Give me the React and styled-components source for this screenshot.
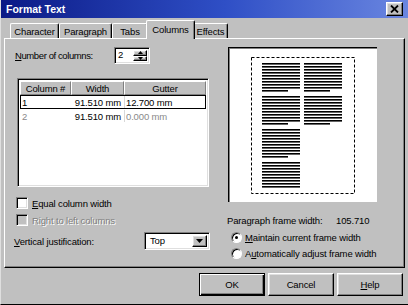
import React from 'react';
import styled, { createGlobalStyle, css } from 'styled-components';

const GlobalStyle = createGlobalStyle`
  html, body {
    margin: 0;
    padding: 0;
    overflow: hidden;
    background: #c0c0c0;
  }
`;

const raised = css`
  border-top: 1px solid #fff;
  border-left: 1px solid #fff;
  border-right: 1px solid #000;
  border-bottom: 1px solid #000;
  box-shadow: inset -1px -1px 0 #808080, inset 1px 1px 0 #dfdfdf;
`;

const sunken = css`
  border-top: 1px solid #808080;
  border-left: 1px solid #808080;
  border-right: 1px solid #fff;
  border-bottom: 1px solid #fff;
  box-shadow: inset 1px 1px 0 #000, inset -1px -1px 0 #dfdfdf;
`;

const Window = styled.div`
  box-sizing: border-box;
  width: 408px;
  height: 305px;
  padding: 0 3px 3px 3px;
  background: #c0c0c0;
  border-left: 1px solid #dfdfdf;
  border-bottom: 1px solid #000;
  display: flex;
  flex-direction: column;
  font-family: "Liberation Sans", Arial, sans-serif;
  font-size: 9.5px;
  letter-spacing: -0.15px;
  color: #000;
  white-space: nowrap;
`;

const TitleBar = styled.div`
  height: 18px;
  margin: 0 -3px;
  padding: 0 5px;
  display: flex;
  align-items: center;
  justify-content: space-between;
  background: linear-gradient(to right, #0b1a86 0%, #2f4fc6 55%, #6a86e0 100%);
`;

const Title = styled.span`
  color: #fff;
  font-weight: bold;
  font-size: 10.5px;
  letter-spacing: 0;
`;

const CloseButton = styled.div`
  box-sizing: border-box;
  width: 17px;
  height: 14px;
  background: #c0c0c0;
  display: flex;
  align-items: center;
  justify-content: center;
  ${raised};
`;

const TabRow = styled.div`
  height: 18px;
  margin-top: 2px;
  padding-left: 6px;
  display: flex;
  align-items: flex-end;
`;

const Tab = styled.div`
  box-sizing: border-box;
  width: ${(p) => p.$w}px;
  height: ${(p) => (p.$active ? 19 : 15)}px;
  margin: 0 ${(p) => (p.$active ? -2 : 0)}px ${(p) => (p.$active ? -1 : 0)}px;
  position: relative;
  z-index: ${(p) => (p.$active ? 2 : 1)};
  background: #c0c0c0;
  border-top: 1px solid #fff;
  border-left: 1px solid #fff;
  border-right: 1px solid #000;
  border-radius: 2px 2px 0 0;
  box-shadow: inset -1px 0 0 #808080;
  display: flex;
  align-items: center;
  justify-content: center;
  padding-bottom: ${(p) => (p.$active ? 2 : 0)}px;
`;

const Panel = styled.div`
  box-sizing: border-box;
  height: 230px;
  padding: 8px 4px 0 7px;
  display: flex;
  ${raised};
  box-shadow: inset -1px -1px 0 #808080;
`;

const LeftCol = styled.div`
  width: 207px;
  display: flex;
  flex-direction: column;
`;

const RightCol = styled.div`
  flex: 1;
  display: flex;
  flex-direction: column;
  padding-left: 8px;
`;

const NumRow = styled.div`
  height: 17px;
  display: flex;
  align-items: center;
`;

const NumLabel = styled.span`
  width: 99px;
  padding-left: 3px;
  letter-spacing: -0.4px;
`;

const Spinner = styled.div`
  box-sizing: border-box;
  width: 36px;
  height: 17px;
  background: #fff;
  display: flex;
  ${sunken};
`;

const SpinValue = styled.span`
  flex: 1;
  padding: 1px 0 0 3px;
`;

const SpinButtons = styled.div`
  width: 14px;
  padding: 2px 2px 2px 0;
  display: flex;
  flex-direction: column;
`;

const SpinButton = styled.div`
  box-sizing: border-box;
  flex: 1;
  background: #c0c0c0;
  display: flex;
  align-items: center;
  justify-content: center;
  ${raised};
`;

const Table = styled.div`
  box-sizing: border-box;
  width: 192px;
  height: 109px;
  margin: 14px 0 0 5px;
  background: #fff;
  display: flex;
  flex-direction: column;
  padding: 2px;
  ${sunken};
`;

const HeadRow = styled.div`
  display: grid;
  grid-template-columns: 51px 53px 1fr;
  height: 14px;
`;

const HeadCell = styled.div`
  box-sizing: border-box;
  background: #c0c0c0;
  display: flex;
  align-items: center;
  justify-content: center;
  border-top: 1px solid #fff;
  border-left: 1px solid #fff;
  border-right: 1px solid #808080;
  border-bottom: 1px solid #808080;
`;

const Row = styled.div`
  box-sizing: border-box;
  display: grid;
  grid-template-columns: 51px 53px 1fr;
  height: 14px;
  border: 1px solid ${(p) => (p.$focus ? '#000' : 'transparent')};
`;

const Cell = styled.div`
  display: flex;
  align-items: center;
  overflow: hidden;
  justify-content: ${(p) => (p.$right ? 'flex-end' : 'flex-start')};
  padding: 0 ${(p) => (p.$right ? 3 : 1)}px 0 1px;
  color: ${(p) => (p.$dim ? '#8a8a8a' : '#000')};
  border-right: ${(p) => (p.$divider ? '1px solid #d8d8d8' : 'none')};
`;

const CheckRow = styled.label`
  display: flex;
  align-items: center;
  gap: 4px;
  height: 12px;
  margin-top: ${(p) => p.$mt}px;
  padding-left: 4px;
  color: ${(p) => (p.$disabled ? '#808080' : '#000')};
  text-shadow: ${(p) => (p.$disabled ? '1px 1px 0 #fff' : 'none')};
`;

const CheckBox = styled.span`
  box-sizing: border-box;
  flex-shrink: 0;
  width: 12px;
  height: 12px;
  background: ${(p) => (p.$disabled ? '#c0c0c0' : '#fff')};
  ${sunken};
`;

const JustRow = styled.div`
  display: flex;
  align-items: center;
  height: 18px;
  margin-top: 6px;
`;

const JustLabel = styled.span`
  width: 130px;
  padding-left: 2px;
`;

const Select = styled.div`
  box-sizing: border-box;
  width: 66px;
  height: 18px;
  background: #fff;
  display: flex;
  ${sunken};
`;

const SelectValue = styled.span`
  flex: 1;
  padding: 2px 0 0 5px;
`;

const SelectArrow = styled.div`
  box-sizing: border-box;
  width: 15px;
  margin: 2px;
  background: #c0c0c0;
  display: flex;
  align-items: center;
  justify-content: center;
  ${raised};
`;

const Preview = styled.div`
  box-sizing: border-box;
  width: 149px;
  height: 155px;
  margin-left: 1px;
  background: #fff;
  border-top: 1px solid #000;
  border-left: 1px solid #000;
  box-shadow: inset 1px 1px 0 #808080;
`;

const FrameWidth = styled.div`
  display: flex;
  margin-top: 12px;
  height: 12px;
  align-items: center;
`;

const FrameLabel = styled.span`
  width: 109px;
`;

const RadioRow = styled.div`
  display: flex;
  align-items: center;
  gap: 3px;
  height: 12px;
  margin-top: ${(p) => p.$mt}px;
  padding-left: 4px;
`;

const Radio = styled.span`
  box-sizing: border-box;
  flex-shrink: 0;
  width: 11px;
  height: 11px;
  border-radius: 50%;
  background: #fff;
  border: 1px solid;
  border-color: #808080 #fff #fff #808080;
  box-shadow: inset 1px 1px 0 #000;
  display: flex;
  align-items: center;
  justify-content: center;
  &::after {
    content: '';
    width: 3px;
    height: 3px;
    border-radius: 50%;
    background: ${(p) => (p.$checked ? '#000' : 'transparent')};
  }
`;

const ButtonRow = styled.div`
  display: flex;
  justify-content: flex-end;
  gap: 3px;
  margin-top: 5px;
  padding-right: 2px;
`;

const Button = styled.div`
  box-sizing: border-box;
  width: 66px;
  height: 23px;
  background: #c0c0c0;
  display: flex;
  align-items: center;
  justify-content: center;
  ${raised};
  ${(p) =>
    p.$default &&
    css`
      border: 1px solid #000;
      box-shadow: inset 1px 1px 0 #fff, inset -1px -1px 0 #000, inset -2px -2px 0 #808080;
    `}
`;

const tabs = [
  { label: 'Character', w: 49 },
  { label: 'Paragraph', w: 53 },
  { label: 'Tabs', w: 36 },
  { label: 'Columns', w: 49, active: true },
  { label: 'Effects', w: 35 },
];

const PreviewDrawing = () => {
  const lines = [];
  const col = (x, top, bottom, key) => {
    let i = 0;
    for (let y = top; y <= bottom; y += 3, i += 1) {
      const pos = i % 11;
      if (pos === 10) continue;
      const w = pos === 9 ? 26 : 38;
      lines.push(<rect key={`${key}${i}`} x={x} y={y} width={w} height={1.6} fill="#000" />);
    }
  };
  col(33, 15, 140, 'a');
  col(75, 15, 79, 'b');
  return (
    <svg width="147" height="153" viewBox="0 0 147 153">
      <rect x="22.5" y="9.5" width="103" height="136" fill="none" stroke="#000" strokeDasharray="3 2" />
      {lines}
    </svg>
  );
};

const App = () => (
  <>
    <GlobalStyle />
    <Window>
      <TitleBar>
        <Title>Format Text</Title>
        <CloseButton>
          <svg width="9" height="8" viewBox="0 0 9 8">
            <path d="M1 0.5 L8 7.5 M8 0.5 L1 7.5" stroke="#000" strokeWidth="1.8" />
          </svg>
        </CloseButton>
      </TitleBar>

      <TabRow>
        {tabs.map((t) => (
          <Tab key={t.label} $w={t.w} $active={t.active}>
            {t.label}
          </Tab>
        ))}
      </TabRow>

      <Panel>
        <LeftCol>
          <NumRow>
            <NumLabel><u>N</u>umber of columns:</NumLabel>
            <Spinner>
              <SpinValue>2</SpinValue>
              <SpinButtons>
                <SpinButton>
                  <svg width="5" height="3"><path d="M2.5 0 L5 3 L0 3Z" fill="#000" /></svg>
                </SpinButton>
                <SpinButton>
                  <svg width="5" height="3"><path d="M0 0 L5 0 L2.5 3Z" fill="#000" /></svg>
                </SpinButton>
              </SpinButtons>
            </Spinner>
          </NumRow>

          <Table>
            <HeadRow>
              <HeadCell>Column #</HeadCell>
              <HeadCell>Width</HeadCell>
              <HeadCell>Gutter</HeadCell>
            </HeadRow>
            <Row $focus>
              <Cell>1</Cell>
              <Cell $right $divider>91.510 mm</Cell>
              <Cell>12.700 mm</Cell>
            </Row>
            <Row>
              <Cell $dim>2</Cell>
              <Cell $right $divider>91.510 mm</Cell>
              <Cell $dim>0.000 mm</Cell>
            </Row>
          </Table>

          <CheckRow $mt={10}>
            <CheckBox />
            <span><u>E</u>qual column width</span>
          </CheckRow>
          <CheckRow $mt={5} $disabled>
            <CheckBox $disabled />
            <span>Right to left columns</span>
          </CheckRow>

          <JustRow>
            <JustLabel><u>V</u>ertical justification:</JustLabel>
            <Select>
              <SelectValue>Top</SelectValue>
              <SelectArrow>
                <svg width="7" height="4"><path d="M0 0 L7 0 L3.5 4Z" fill="#000" /></svg>
              </SelectArrow>
            </Select>
          </JustRow>
        </LeftCol>

        <RightCol>
          <Preview>
            <PreviewDrawing />
          </Preview>
          <FrameWidth>
            <FrameLabel>Paragraph frame width:</FrameLabel>
            <span>105.710</span>
          </FrameWidth>
          <RadioRow $mt={5}>
            <Radio $checked />
            <span><u>M</u>aintain current frame width</span>
          </RadioRow>
          <RadioRow $mt={4}>
            <Radio />
            <span>A<u>u</u>tomatically adjust frame width</span>
          </RadioRow>
        </RightCol>
      </Panel>

      <ButtonRow>
        <Button $default>OK</Button>
        <Button>Cancel</Button>
        <Button><span><u>H</u>elp</span></Button>
      </ButtonRow>
    </Window>
  </>
);

export default App;
